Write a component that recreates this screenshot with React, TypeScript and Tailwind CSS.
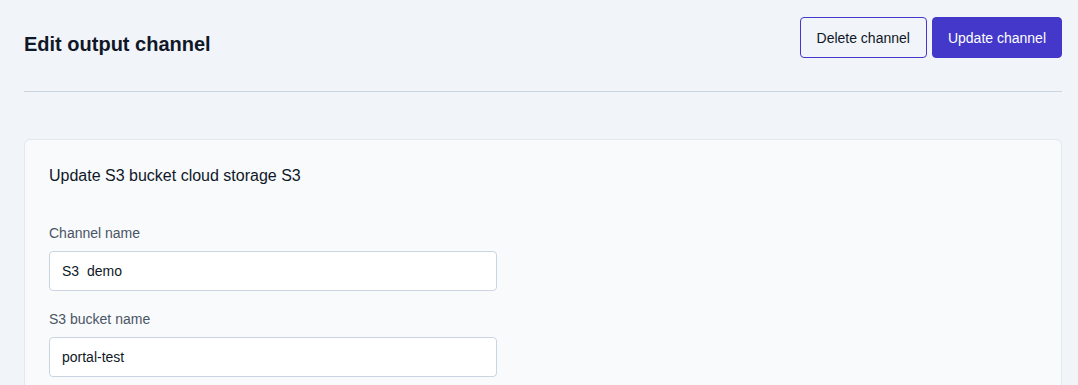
export default function App() {
  return (
    <div
      className="min-h-screen bg-[#f1f4f9] pl-6 pr-4 text-gray-900"
      style={{ fontFamily: '"Liberation Sans", Arial, sans-serif' }}
    >
      {/* header */}
      <div className="flex items-end justify-between pt-[17px]">
        <h1 className="text-xl font-bold leading-7">Edit output channel</h1>
        <div className="flex gap-[5px]">
          <button className="h-[41px] rounded border border-[#4338ca] bg-transparent px-4 text-sm text-gray-900">
            Delete channel
          </button>
          <button className="h-[41px] rounded border border-[#4338ca] bg-[#4338ca] px-[15px] text-sm text-white">
            Update channel
          </button>
        </div>
      </div>

      <div className="mt-[33px] border-t border-[#cbd5e1]" />

      {/* form card */}
      <div className="mt-[47px] rounded-md border border-[#e2e8f0] bg-[#f8fafc] p-6">
        <h2 className="text-base leading-6">Update S3 bucket cloud storage S3</h2>

        <div className="mt-[35px] flex flex-col">
          <label className="text-sm leading-5 text-gray-600">Channel name</label>
          <input
            className="mt-2 h-10 w-[448px] rounded border border-[#cbd5e1] bg-white px-3 text-sm text-gray-900 outline-none"
            defaultValue="S3  demo"
          />
          <label className="mt-[18px] text-sm leading-5 text-gray-600">S3 bucket name</label>
          <input
            className="mt-2 h-10 w-[448px] rounded border border-[#cbd5e1] bg-white px-3 text-sm text-gray-900 outline-none"
            defaultValue="portal-test"
          />
        </div>
      </div>
    </div>
  );
}
